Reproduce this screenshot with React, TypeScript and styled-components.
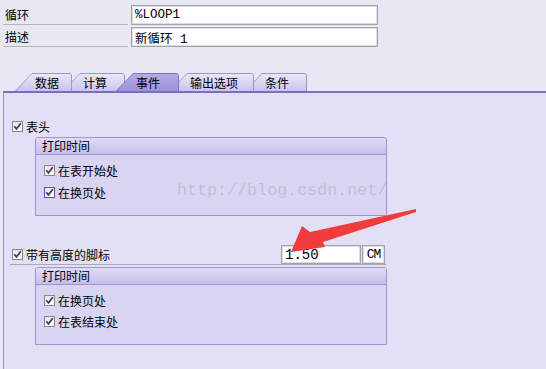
import React from 'react';
import styled, { createGlobalStyle } from 'styled-components';

const Global = createGlobalStyle`
  html, body { margin: 0; padding: 0; }
  body {
    background: #e8e8f4;
    font-family: "Noto Sans CJK SC", "Noto Sans", sans-serif;
    font-size: 12px;
    color: #000;
  }
`;

const Page = styled.div`
  position: relative;
  width: 546px;
  height: 369px;
  overflow: hidden;
  box-sizing: border-box;
  padding-top: 5px;
  display: flex;
  flex-direction: column;
`;

const FieldRows = styled.div`
  display: flex;
  flex-direction: column;
  gap: 2px;
  padding-left: 3px;
`;

const FieldRow = styled.div`
  display: flex;
  gap: 3px;
  height: 20px;
`;

const FieldLabel = styled.div`
  width: 125px;
  box-sizing: border-box;
  border-bottom: 1px solid #b4b4bc;
  padding-left: 2px;
  line-height: 19px;
`;

const TextInput = styled.div<{ $w: number; $size?: number; $h?: number }>`
  width: ${(p) => p.$w}px;
  ${(p) => (p.$h ? `height: ${p.$h}px;` : '')}
  box-sizing: border-box;
  background: #fff;
  border: 1px solid #a2a2aa;
  box-shadow: inset 0 0 0 1px #dedee2;
  padding-left: 3px;
  display: flex;
  align-items: center;
  font-family: "Liberation Mono", "Noto Sans CJK SC", monospace;
  font-size: ${(p) => p.$size ?? 12.5}px;
`;

const TabStrip = styled.div`
  margin-top: 26px;
  padding-left: 15px;
  height: 18px;
  display: flex;
  align-items: flex-end;
`;

const TabOuter = styled.div<{ $active?: boolean; $z: number; $w: number }>`
  position: relative;
  z-index: ${(p) => (p.$active ? 20 : p.$z)};
  width: ${(p) => p.$w}px;
  margin-left: -9px;
  &:first-child { margin-left: 0; }
  height: 18px;
  box-sizing: border-box;
  padding: 1px 1px 0 1px;
  background: ${(p) => (p.$active ? '#7f72c4' : '#9d95cc')};
  clip-path: polygon(0 100%, 17px 0, calc(100% - 2px) 0, 100% 2px, 100% 100%);
  display: flex;
`;

const TabInner = styled.div<{ $active?: boolean }>`
  flex: 1;
  height: 17px;
  box-sizing: border-box;
  padding-left: 19px;
  line-height: 17px;
  background: ${(p) =>
    p.$active
      ? 'linear-gradient(#b3aae6, #9d92dc)'
      : 'linear-gradient(#e9e7f7, #c9c4eb)'};
  clip-path: polygon(0 100%, 16px 0, calc(100% - 1px) 0, 100% 1px, 100% 100%);
  white-space: nowrap;
`;

const Panel = styled.div`
  flex: 1;
  margin-left: 3px;
  border-top: 2px solid #7b6dc2;
  border-left: 1px solid #9a92cc;
  background: #e2e0f5;
  padding: 25px 0 0 8px;
  display: flex;
  flex-direction: column;
  align-items: flex-start;
`;

const CheckRow = styled.div`
  display: flex;
  align-items: center;
  height: 16px;
  gap: 3px;
  white-space: nowrap;
`;

const Box = styled.span<{ $focus?: boolean }>`
  width: 11px;
  height: 11px;
  box-sizing: border-box;
  border: 1px solid ${(p) => (p.$focus ? '#5b4db6' : '#85859a')};
  background: linear-gradient(#e6e6ee, #ffffff);
  display: flex;
  align-items: center;
  justify-content: center;
`;

const Check = ({ focus }: { focus?: boolean }) => (
  <Box $focus={focus}>
    <svg width="9" height="9" viewBox="0 0 9 9">
      <path d="M1.3 4.3 L3.4 6.8 L7.8 1.3" fill="none" stroke="#3c3c4c" strokeWidth="1.7" />
    </svg>
  </Box>
);

const Group = styled.div<{ $mt: number }>`
  margin-top: ${(p) => p.$mt}px;
  margin-left: 23px;
  width: 352px;
  box-sizing: border-box;
  border: 1px solid #9c94d4;
  border-radius: 3px 3px 0 0;
  background: #d8d4f2;
`;

const GroupHeader = styled.div`
  height: 17px;
  box-sizing: border-box;
  border-bottom: 1px solid #9c94d4;
  background: linear-gradient(#dfdbf6, #c5bfea);
  padding-left: 6px;
  line-height: 16px;
  border-radius: 2px 2px 0 0;
`;

const GroupBody = styled.div<{ $gap: number }>`
  display: flex;
  flex-direction: column;
  gap: ${(p) => p.$gap}px;
  padding: 7px 0 15px 8px;
`;

const FooterRow = styled.div`
  margin-top: 29px;
  margin-left: -2px;
  width: 376px;
  height: 20px;
  box-sizing: border-box;
  border-bottom: 1px solid #a8a6b8;
  padding-left: 2px;
  padding-right: 1px;
  display: flex;
  align-items: flex-start;
`;

const Spacer = styled.div`
  flex: 1;
`;

const FooterCheck = styled(CheckRow)`
  height: 19px;
`;

const UnitBox = styled.div`
  width: 23px;
  height: 19px;
  margin-left: 1px;
  box-sizing: border-box;
  background: #fff;
  border: 1px solid #a2a2aa;
  box-shadow: inset 0 0 0 1px #dedee2;
  display: flex;
  align-items: center;
  justify-content: center;
  font-family: "Liberation Mono", monospace;
  font-size: 13px;
  letter-spacing: -1px;
`;

const Watermark = styled.div`
  position: absolute;
  left: 177px;
  top: 181px;
  font-family: "Liberation Mono", monospace;
  font-size: 16.7px;
  color: rgba(150, 150, 150, 0.35);
  pointer-events: none;
  white-space: nowrap;
`;

const ArrowLayer = styled.svg`
  position: absolute;
  left: 0;
  top: 0;
  pointer-events: none;
`;

const tabs = [
  { label: '数据', w: 57 },
  { label: '计算', w: 62 },
  { label: '事件', w: 63 },
  { label: '输出选项', w: 84 },
  { label: '条件', w: 62 },
];

export default function App() {
  return (
    <>
      <Global />
      <Page>
        <FieldRows>
          <FieldRow>
            <FieldLabel>循环</FieldLabel>
            <TextInput $w={247}>%LOOP1</TextInput>
          </FieldRow>
          <FieldRow>
            <FieldLabel>描述</FieldLabel>
            <TextInput $w={247}>新循环 1</TextInput>
          </FieldRow>
        </FieldRows>

        <TabStrip>
          {tabs.map((t, i) => (
            <TabOuter key={t.label} $active={i === 2} $z={10 - i} $w={t.w}>
              <TabInner $active={i === 2}>{t.label}</TabInner>
            </TabOuter>
          ))}
        </TabStrip>

        <Panel>
          <CheckRow>
            <Check />
            表头
          </CheckRow>
          <Group $mt={3}>
            <GroupHeader>打印时间</GroupHeader>
            <GroupBody $gap={6}>
              <CheckRow>
                <Check />
                在表开始处
              </CheckRow>
              <CheckRow>
                <Check focus />
                在换页处
              </CheckRow>
            </GroupBody>
          </Group>

          <FooterRow>
            <FooterCheck>
              <Check />
              带有高度的脚标
            </FooterCheck>
            <Spacer />
            <TextInput $w={80} $size={14} $h={19}>1.50</TextInput>
            <UnitBox>CM</UnitBox>
          </FooterRow>

          <Group $mt={2}>
            <GroupHeader>打印时间</GroupHeader>
            <GroupBody $gap={5}>
              <CheckRow>
                <Check />
                在换页处
              </CheckRow>
              <CheckRow>
                <Check />
                在表结束处
              </CheckRow>
            </GroupBody>
          </Group>
        </Panel>

        <Watermark>http://blog.csdn.net/</Watermark>
        <ArrowLayer width="546" height="369" viewBox="0 0 546 369">
          <polygon
            points="416,209 416,212 323,242 325,247 291,252 302,226 310,232"
            fill="#f03c3c"
          />
        </ArrowLayer>
      </Page>
    </>
  );
}
